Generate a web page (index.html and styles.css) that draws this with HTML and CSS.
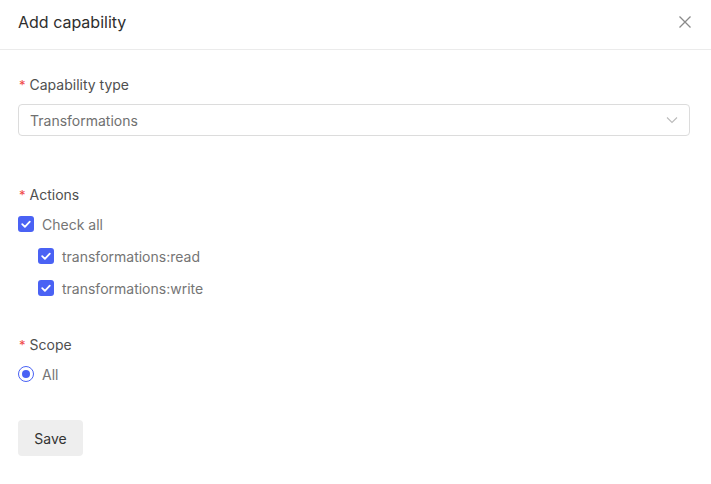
FILE: index.html
```html
<!DOCTYPE html>
<html>
<head>
<meta charset="utf-8">
<link rel="stylesheet" href="styles.css">
</head>
<body>
<div class="modal">
  <div class="header">
    <div class="title">Add capability</div>
    <svg class="close" width="14" height="14" viewBox="0 0 14 14"><path d="M1.5 1.5 L12.5 12.5 M12.5 1.5 L1.5 12.5" stroke="#8a8a8a" stroke-width="1.3" fill="none"/></svg>
  </div>
  <div class="body">
    <div class="field">
      <div class="label"><span class="req">*</span>Capability type</div>
      <div class="select">
        <span>Transformations</span>
        <svg width="12" height="8" viewBox="0 0 12 8"><path d="M1 1.5 L6 6.5 L11 1.5" stroke="#bbbbbb" stroke-width="1.1" fill="none"/></svg>
      </div>
    </div>
    <div class="field actions">
      <div class="label"><span class="req">*</span>Actions</div>
      <div class="checks">
        <label class="check"><span class="box"><svg width="16" height="16" viewBox="0 0 16 16"><path d="M4.2 8.2 L6.9 10.8 L11.8 5.6" stroke="#fff" stroke-width="1.8" fill="none" stroke-linecap="round" stroke-linejoin="round"/></svg></span>Check all</label>
        <div class="sub">
          <label class="check"><span class="box"><svg width="16" height="16" viewBox="0 0 16 16"><path d="M4.2 8.2 L6.9 10.8 L11.8 5.6" stroke="#fff" stroke-width="1.8" fill="none" stroke-linecap="round" stroke-linejoin="round"/></svg></span>transformations:read</label>
          <label class="check"><span class="box"><svg width="16" height="16" viewBox="0 0 16 16"><path d="M4.2 8.2 L6.9 10.8 L11.8 5.6" stroke="#fff" stroke-width="1.8" fill="none" stroke-linecap="round" stroke-linejoin="round"/></svg></span>transformations:write</label>
        </div>
      </div>
    </div>
    <div class="field scope">
      <div class="label"><span class="req">*</span>Scope</div>
      <label class="check"><span class="radio"><span class="dot"></span></span>All</label>
    </div>
    <button class="save">Save</button>
  </div>
</div>
</body>
</html>
```

FILE: styles.css
```css
* { box-sizing: border-box; }
html, body { margin: 0; padding: 0; background: #fff; }
body { font-family: Inter, "Noto Sans", sans-serif; color: #333; }
.modal { width: 711px; height: 484px; background: #fff; }
.header {
  height: 50px;
  border-bottom: 1px solid #ebebeb;
  display: flex;
  align-items: center;
  justify-content: space-between;
  padding: 0 19px 0 18px;
}
.title { font-size: 16px; color: #2e2e2e; font-weight: 400; padding-bottom: 6px; }
.close { margin-bottom: 5px; }
.body { padding: 25px 21px 0 18px; }
.label { font-size: 14px; color: #4f4f4f; line-height: 20px; display: flex; align-items: center; }
.req { color: #f04848; margin-left: 1px; margin-right: 4px; font-size: 13px; }
.select {
  margin-top: 9px;
  height: 32px;
  border: 1px solid #dcdcdc;
  border-radius: 4px;
  display: flex;
  align-items: center;
  justify-content: space-between;
  padding: 0 11px 0 11px;
  font-size: 14px;
  color: #707070;
}
.actions { margin-top: 49px; }
.checks { margin-top: 11px; display: flex; flex-direction: column; }
.check { display: flex; align-items: center; font-size: 14px; color: #757575; height: 16px; }
.box {
  width: 16px; height: 16px; border-radius: 3px; background: #4a62f4;
  display: inline-flex; margin-right: 8px;
}
.sub { display: flex; flex-direction: column; padding-left: 20px; gap: 16px; margin-top: 16px; }
.scope { margin-top: 39px; }
.scope .check { margin-top: 11px; }
.radio {
  width: 16px; height: 16px; border-radius: 50%; border: 1px solid #4a62f4;
  display: inline-flex; align-items: center; justify-content: center; margin-right: 8px;
}
.dot { width: 8px; height: 8px; border-radius: 50%; background: #4a62f4; }
.save {
  margin-top: 38px;
  width: 65px; height: 36px;
  border: none; border-radius: 4px;
  background: #eeeeee;
  font-family: Inter, sans-serif; font-size: 14px; color: #333;
  padding: 0;
}
```
